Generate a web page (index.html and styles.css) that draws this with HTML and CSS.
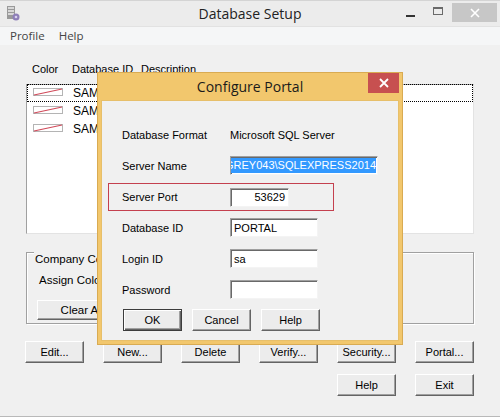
FILE: index.html
```html
<!DOCTYPE html>
<html>
<head>
<meta charset="utf-8">
<link rel="stylesheet" href="styles.css">
</head>
<body>
<div class="window">
  <div class="titlebar">
    <div class="tb-left">
      <svg class="app-icon" width="16" height="16" viewBox="0 0 16 16">
        <rect x="2" y="1" width="8" height="13" fill="#9a9a9a"/>
        <rect x="3" y="2" width="6" height="2" fill="#d8d8d8"/>
        <rect x="3" y="5" width="6" height="2" fill="#d8d8d8"/>
        <rect x="3" y="8" width="6" height="2" fill="#d8d8d8"/>
        <circle cx="11" cy="12" r="3.5" fill="#8e7fb8"/>
        <circle cx="11" cy="12" r="1.3" fill="#d8d0ee"/>
      </svg>
    </div>
    <div class="tb-title">Database Setup</div>
    <div class="tb-controls">
      <div class="ctl ctl-min"><span class="min-bar"></span></div>
      <div class="ctl ctl-max"><span class="max-box"></span></div>
      <div class="ctl ctl-close">
        <svg width="10" height="10" viewBox="0 0 10 10"><path d="M1 1 L9 9 M9 1 L1 9" stroke="#fff" stroke-width="1.6"/></svg>
      </div>
    </div>
  </div>
  <div class="menubar">
    <span class="menu-item">Profile</span>
    <span class="menu-item">Help</span>
  </div>
  <div class="client">
    <div class="list-header">
      <span>Color</span>
      <span>Database ID</span>
      <span>Description</span>
    </div>
    <div class="listbox">
      <div class="row row-focus">
        <svg class="swatch" width="30" height="8" viewBox="0 0 30 8"><rect x="0.5" y="0.5" width="29" height="7" fill="#fff" stroke="#b4b4b4"/><path d="M1 7 L29 1" stroke="#d04a5a" stroke-width="1.2"/></svg>
        <span>SAMPLE</span>
      </div>
      <div class="row">
        <svg class="swatch" width="30" height="8" viewBox="0 0 30 8"><rect x="0.5" y="0.5" width="29" height="7" fill="#fff" stroke="#b4b4b4"/><path d="M1 7 L29 1" stroke="#d04a5a" stroke-width="1.2"/></svg>
        <span>SAMPLE</span>
      </div>
      <div class="row">
        <svg class="swatch" width="30" height="8" viewBox="0 0 30 8"><rect x="0.5" y="0.5" width="29" height="7" fill="#fff" stroke="#b4b4b4"/><path d="M1 7 L29 1" stroke="#d04a5a" stroke-width="1.2"/></svg>
        <span>SAMS</span>
      </div>
    </div>
    <div class="groupbox">
      <span class="group-label">Company Colors</span>
      <div class="assign">Assign Colors</div>
      <div class="btn btn-clear">Clear All</div>
    </div>
    <div class="btn-row">
      <div class="btn">Edit...</div>
      <div class="btn">New...</div>
      <div class="btn">Delete</div>
      <div class="btn">Verify...</div>
      <div class="btn">Security...</div>
      <div class="btn">Portal...</div>
    </div>
    <div class="btn-row btn-row2">
      <div class="btn">Help</div>
      <div class="btn">Exit</div>
    </div>
  </div>

  <div class="dialog">
    <div class="dlg-titlebar">
      <div class="dlg-title">Configure Portal</div>
      <div class="dlg-close">
        <svg width="10" height="10" viewBox="0 0 10 10"><path d="M1 1 L9 9 M9 1 L1 9" stroke="#fff" stroke-width="1.8"/></svg>
      </div>
    </div>
    <div class="dlg-body">
      <div class="frow">
        <span class="flabel">Database Format</span>
        <span>Microsoft SQL Server</span>
      </div>
      <div class="frow">
        <span class="flabel">Server Name</span>
        <div class="input input-wide input-sel"><span class="sel">GREY043\SQLEXPRESS2014</span></div>
      </div>
      <div class="frow frow-hl">
        <span class="flabel">Server Port</span>
        <div class="input input-port">53629</div>
      </div>
      <div class="frow">
        <span class="flabel">Database ID</span>
        <div class="input">PORTAL</div>
      </div>
      <div class="frow">
        <span class="flabel">Login ID</span>
        <div class="input">sa</div>
      </div>
      <div class="frow">
        <span class="flabel">Password</span>
        <div class="input"></div>
      </div>
      <div class="dlg-buttons">
        <div class="btn btn-default">OK</div>
        <div class="btn">Cancel</div>
        <div class="btn">Help</div>
      </div>
    </div>
  </div>
</div>
</body>
</html>
```

FILE: styles.css
```css
* { box-sizing: border-box; }
html, body { margin: 0; padding: 0; }
body {
  width: 500px;
  height: 417px;
  overflow: hidden;
  background: #f0f0f0;
  font-family: "Liberation Sans", Arial, sans-serif;
  font-size: 11px;
  color: #000;
}
.window {
  position: relative;
  width: 500px;
  height: 417px;
  background: #f0f0f0;
  border-top: 1px solid #d4d4d4;
  border-bottom: 1px solid #b9b9b9;
}
.titlebar {
  height: 26px;
  background: #ececec;
  display: grid;
  grid-template-columns: 1fr auto 1fr;
  align-items: start;
  border-bottom: 1px solid #e2e2e2;
}
.tb-left { padding: 4px 0 0 5px; }
.app-icon { display: block; }
.tb-title {
  font-family: "Open Sans", "Noto Sans", sans-serif;
  font-size: 14px;
  line-height: 26px;
  color: #222;
}
.tb-controls {
  display: flex;
  justify-content: flex-end;
  padding-top: 2px;
  padding-right: 3px;
}
.ctl {
  height: 19px;
  display: flex;
  align-items: center;
  justify-content: center;
}
.ctl-min { width: 26px; }
.min-bar { width: 9px; height: 2px; background: #333; margin-top: 6px; margin-right: 6px; }
.ctl-max { width: 26px; }
.max-box { width: 10px; height: 8px; border: 1px solid #6a6a6a; border-top-width: 2px; margin-top: -4px; margin-right: 2px; }
.ctl-close { width: 45px; background: #c7c7c7; }

.menubar {
  height: 18px;
  background: #f5f6f7;
  display: flex;
  padding-left: 3px;
  font-family: "Open Sans", "Noto Sans", sans-serif;
  font-size: 11.5px;
  line-height: 18px;
  color: #444;
}
.menu-item { padding: 0 7px 0 7px; }

.client { padding: 0 26px; }
.list-header {
  margin-top: 17px;
  height: 14px;
  line-height: 14px;
  display: grid;
  grid-template-columns: 40px 69px auto;
  padding-left: 6px;
}
.listbox {
  margin-top: 8px;
  height: 150px;
  background: #fff;
  border: 1px solid;
  border-color: #a0a0a0 #e3e3e3 #e3e3e3 #a0a0a0;
}
.row {
  height: 18px;
  display: flex;
  align-items: center;
  padding-left: 6px;
  gap: 10px;
  font-size: 12px;
}
.row-focus { border: 1px dotted #000; margin-top: -1px; padding-left: 5px; }
.swatch { display: block; margin-top: -2px; }

.groupbox {
  margin-top: 18px;
  height: 72px;
  border: 1px solid #a0a0a0;
  box-shadow: 1px 1px 0 #fff, inset 1px 1px 0 #fff;
  padding-left: 10px;
}
.group-label {
  display: inline-block;
  margin-top: -8px;
  margin-left: -3px;
  padding: 0 1px;
  background: #f0f0f0;
  line-height: 14px;
  font-size: 11.5px;
}
.assign {
  margin-top: 7px;
  line-height: 14px;
  padding-left: 2px;
  font-size: 11.5px;
}
.btn {
  width: 59px;
  height: 22px;
  display: flex;
  align-items: center;
  justify-content: center;
  background: #ececec;
  border: 1px solid;
  border-color: #fff #646464 #646464 #fff;
  box-shadow: inset -1px -1px 0 #a0a0a0;
  font-size: 11px;
  color: #000;
}
.btn-clear {
  margin-top: 13px;
  width: 90px;
  height: 20px;
  font-size: 11.5px;
}
.btn-row {
  display: flex;
  gap: 19px;
  margin-top: 17px;
  margin-left: -1px;
}
.btn-row2 {
  margin-top: 11px;
  justify-content: flex-end;
}

.dialog {
  position: absolute;
  left: 97px;
  top: 71px;
  width: 306px;
  height: 273px;
  background: #f2c76d;
  border: 1px solid #d9ab52;
  padding: 0 3px 3px 3px;
  display: flex;
  flex-direction: column;
}
.dlg-titlebar {
  height: 27px;
  display: flex;
  align-items: flex-start;
}
.dlg-title {
  flex: 1;
  padding-left: 31px;
  text-align: center;
  font-family: "Open Sans", "Noto Sans", sans-serif;
  font-size: 14px;
  line-height: 27px;
  color: #1a1a1a;
}
.dlg-close {
  width: 31px;
  height: 20px;
  background: #c75050;
  display: flex;
  align-items: center;
  justify-content: center;
}
.dlg-body {
  flex: 1;
  background: #f0f0f0;
  border: 1px solid #e7bf6a;
  padding: 18px 0 0 20px;
}
.frow {
  height: 31px;
  display: flex;
  align-items: center;
  font-size: 11px;
}
.flabel { width: 108px; }
.frow-hl {
  height: 28px;
  margin: 2px 0 1px -14px;
  width: 226px;
  border: 1px solid #c4404f;
  padding-left: 13px;
}
.input {
  width: 88px;
  height: 19px;
  background: #fff;
  border: 1px solid;
  border-color: #a0a0a0 #f4f4f4 #f4f4f4 #a0a0a0;
  box-shadow: inset 1px 1px 0 #696969;
  padding: 0 2px 0 3px;
  display: flex;
  align-items: center;
  overflow: hidden;
  white-space: nowrap;
}
.input-wide { width: 148px; height: 19px; justify-content: flex-end; padding: 0 1px 0 2px; }
.input-port { width: 59px; justify-content: flex-end; padding-right: 3px; }
.sel { background: #3399ff; color: #fff; line-height: 15px; flex-shrink: 0; }
.dlg-buttons {
  display: flex;
  gap: 10px;
  margin-top: 4px;
  margin-left: 1px;
}
.btn-default {
  border: 1px solid #3c3c3c;
  box-shadow: inset 1px 1px 0 #fff, inset -1px -1px 0 #646464, inset -2px -2px 0 #a0a0a0;
}
```
